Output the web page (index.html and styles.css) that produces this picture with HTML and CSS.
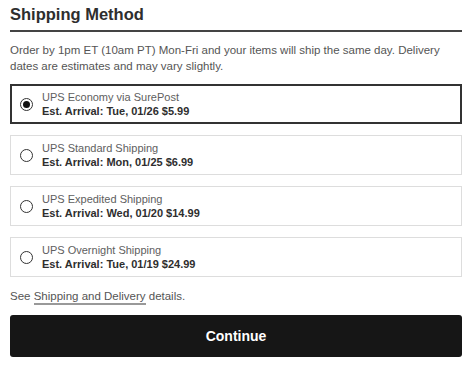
FILE: index.html
```html
<!DOCTYPE html>
<html lang="en">
<head>
    <meta charset="UTF-8">
    <title>Shipping Method</title>
    <link rel="stylesheet" href="styles.css">
</head>
<body>
    <div class="shipping">
        <h1>Shipping Method</h1>
        <p class="intro">Order by 1pm ET (10am PT) Mon-Fri and your items will ship the same day. Delivery dates are estimates and may vary slightly.</p>

        <div class="options">
            <label class="option selected">
                <span class="radio"></span>
                <span class="info">
                    <span class="name">UPS Economy via SurePost</span>
                    <span class="arrival">Est. Arrival: Tue, 01/26 $5.99</span>
                </span>
            </label>
            <label class="option">
                <span class="radio"></span>
                <span class="info">
                    <span class="name">UPS Standard Shipping</span>
                    <span class="arrival">Est. Arrival: Mon, 01/25 $6.99</span>
                </span>
            </label>
            <label class="option">
                <span class="radio"></span>
                <span class="info">
                    <span class="name">UPS Expedited Shipping</span>
                    <span class="arrival">Est. Arrival: Wed, 01/20 $14.99</span>
                </span>
            </label>
            <label class="option">
                <span class="radio"></span>
                <span class="info">
                    <span class="name">UPS Overnight Shipping</span>
                    <span class="arrival">Est. Arrival: Tue, 01/19 $24.99</span>
                </span>
            </label>
        </div>

        <p class="details">See <a href="#">Shipping and Delivery</a> details.</p>

        <button class="continue">Continue</button>
    </div>
</body>
</html>
```

FILE: styles.css
```css
/* Page */
body {
    margin: 0;
    background: #ffffff;
    font-family: "Liberation Sans", Arial, sans-serif;
    color: #555555;
}

.shipping {
    width: 452px;
    padding: 0 10px;
}

/* Heading */
h1 {
    margin: 0;
    padding-top: 4px;
    height: 26px;
    font-size: 16.5px;
    line-height: 21px;
    font-weight: bold;
    color: #2e2e2e;
    border-bottom: 2px solid #444444;
}

.intro {
    margin: 10px 0 0;
    font-size: 11.5px;
    line-height: 16px;
}

/* Shipping options */
.options {
    display: flex;
    flex-direction: column;
    gap: 11px;
    margin-top: 10px;
}

.option {
    display: flex;
    align-items: center;
    gap: 9px;
    height: 40px;
    box-sizing: border-box;
    padding-left: 9px;
    border: 1px solid #dddddd;
    cursor: pointer;
}

.option.selected {
    border: 2px solid #333333;
    padding-left: 8px;
}

.radio {
    width: 13px;
    height: 13px;
    box-sizing: border-box;
    border: 1.5px solid #333333;
    border-radius: 50%;
    display: flex;
    align-items: center;
    justify-content: center;
}

.selected .radio::after {
    content: "";
    width: 7px;
    height: 7px;
    border-radius: 50%;
    background: #111111;
}

.info {
    display: flex;
    flex-direction: column;
    font-size: 11px;
    line-height: 14px;
}

.name {
    color: #5e5e5e;
}

.arrival {
    font-weight: bold;
    color: #2e2e2e;
}

/* Footer */
.details {
    margin: 11px 0 0;
    font-size: 11.5px;
    line-height: 16px;
}

.details a {
    color: #555555;
    text-decoration: none;
    border-bottom: 2px solid #999999;
    padding-bottom: 1px;
}

.continue {
    display: block;
    width: 100%;
    height: 42px;
    margin-top: 11px;
    border: none;
    border-radius: 3px;
    background: #161616;
    color: #ffffff;
    font-family: "Liberation Sans", Arial, sans-serif;
    font-size: 14px;
    font-weight: bold;
    cursor: pointer;
}
```
